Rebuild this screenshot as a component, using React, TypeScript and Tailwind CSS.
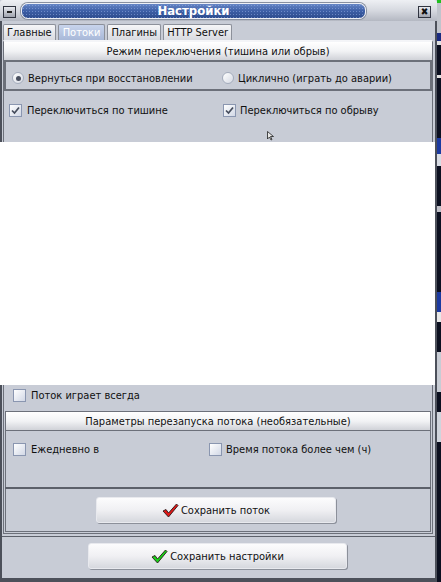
import React from "react";

const Check = ({ checked }: { checked?: boolean }) => (
  <div className="w-[13px] h-[13px] shrink-0 border border-[#8a96b0] bg-gradient-to-br from-[#ffffff] to-[#d2d8e6] flex items-center justify-center">
    {checked && (
      <svg width="9" height="9" viewBox="0 0 9 9">
        <path d="M1 4.5 L3.5 7 L8 1.5" stroke="#454c5c" strokeWidth="1.7" fill="none" />
      </svg>
    )}
  </div>
);

const Radio = ({ checked }: { checked?: boolean }) => (
  <div className="w-[12px] h-[12px] shrink-0 rounded-full border border-[#a4acbc] bg-gradient-to-br from-[#ffffff] to-[#d6dae4] flex items-center justify-center">
    {checked && <div className="w-[5px] h-[5px] rounded-full bg-[#4a5060]" />}
  </div>
);

const Tick = ({ color }: { color: string }) => (
  <svg width="17" height="15" viewBox="0 0 17 15">
    <path
      d="M1 8 L4 6.5 L6.5 10 L14.5 1 L16 2.5 L6.5 14 Z"
      fill={color}
      stroke="#2a1a1a"
      strokeWidth="0.9"
      strokeLinejoin="round"
    />
  </svg>
);

const Btn = ({ label, color, w }: { label: string; color: string; w: string }) => (
  <div
    className={`${w} h-[26px] rounded-[3px] bg-gradient-to-b from-[#fcfcfd] via-[#f0f0f3] to-[#d6d8de] border border-[#e8e9ee] shadow-[1px_1px_0_#8c909a] flex items-center justify-center gap-[2px] text-[#101010]`}
  >
    <Tick color={color} />
    <span>{label}</span>
  </div>
);

const Header = ({ text }: { text: string }) => (
  <div className="h-[19px] shrink-0 bg-gradient-to-b from-[#ffffff] via-[#f2f3f5] to-[#d0d2d8] border-b border-[#6c707a] flex items-center justify-center text-[#101010]">
    {text}
  </div>
);

export default function App() {
  return (
    <div
      className="w-[441px] h-[582px] flex bg-[#c8ccd6] text-[11px] leading-none text-[#101010] overflow-hidden"
      style={{ fontFamily: "'DejaVu Sans Condensed', 'DejaVu Sans', sans-serif", fontStretch: "condensed" }}
    >
      {/* window */}
      <div className="w-[437px] h-[582px] flex flex-col shrink-0">
        {/* title bar */}
        <div className="h-[21px] shrink-0 flex items-center bg-gradient-to-b from-[#eef0f4] via-[#d6d9e0] to-[#b4b8c2] rounded-tl-[3px] rounded-tr-[3px] px-[3px] gap-[5px]">
          <div className="w-[13px] h-[12px] mt-[2px] border border-[#303440] bg-gradient-to-b from-[#e8eaf0] to-[#a0a4ae] flex items-center justify-center">
            <div className="w-[5px] h-[2px] bg-[#202020]" />
          </div>
          <div className="w-[345px] h-[16px] rounded-[7px] border border-[#eef0f6] shadow-[0_0_0_1px_#8890a0] [background-image:radial-gradient(circle,rgba(150,175,230,0.55)_0.7px,transparent_0.9px),linear-gradient(to_bottom,#6686c6,#3d5fa6_50%,#2d4c8e)] [background-size:3px_3px,100%_100%] flex items-center justify-center">
            <span className="text-white font-bold text-[13px]">Настройки</span>
          </div>
          <div className="flex-1" />
          <div className="w-[13px] h-[12px] mt-[2px] mr-[3px] border border-[#303440] bg-gradient-to-b from-[#e8eaf0] to-[#a0a4ae] flex items-center justify-center text-[10px] font-bold">
            ✖
          </div>
        </div>

        {/* top body */}
        <div className="h-[121px] shrink-0 flex flex-col border-l-2 border-r-2 border-[#4c505a]">
          {/* tabs */}
          <div className="h-[19px] shrink-0 pt-[3px] pl-[1px] flex gap-[2px] items-end">
            <div className="h-[16px] px-[3px] flex items-center rounded-t-[2px] border border-b-0 border-[#8c909a] bg-gradient-to-b from-[#f6f6f8] to-[#d8dae0]">Главные</div>
            <div className="h-[16px] px-[4px] flex items-center rounded-t-[2px] border border-b-0 border-[#8c909a] bg-gradient-to-b from-[#c8d4ec] to-[#a8b8d8] text-white">Потоки</div>
            <div className="h-[16px] px-[3px] flex items-center rounded-t-[2px] border border-b-0 border-[#8c909a] bg-gradient-to-b from-[#f6f6f8] to-[#d8dae0]">Плагины</div>
            <div className="h-[16px] px-[3px] flex items-center rounded-t-[2px] border border-b-0 border-[#8c909a] bg-gradient-to-b from-[#f6f6f8] to-[#d8dae0]">HTTP Server</div>
          </div>
          {/* panel */}
          <div className="flex-1 ml-[1px] mr-[2px] border-l border-r border-t-2 border-l-[#6c707a] border-r-[#6c707a] border-t-[#f4f5f8] flex flex-col">
            <Header text="Режим переключения (тишина или обрыв)" />
            <div className="h-[30px] shrink-0 border-l-2 border-r-2 border-b-2 border-t border-[#6c707a] flex items-start pt-[10px] pl-[6px]">
              <div className="w-[210px] flex items-center gap-[4px]">
                <Radio checked />
                <span>Вернуться при восстановлении</span>
              </div>
              <div className="flex items-center gap-[4px]">
                <Radio />
                <span>Циклично (играть до аварии)</span>
              </div>
            </div>
            <div className="pt-[13px] pl-[5px] flex items-center">
              <div className="w-[214px] flex items-center gap-[5px]">
                <Check checked />
                <span>Переключиться по тишине</span>
              </div>
              <div className="flex items-center gap-[4px]">
                <Check checked />
                <span>Переключиться по обрыву</span>
              </div>
            </div>
            <div className="flex-1 relative">
              <svg className="absolute left-[263px] top-[14px]" width="8" height="10" viewBox="0 0 8 10">
                <path d="M0.5 0.5 L0.5 8 L2.5 6 L4 9 L5 8.5 L3.5 5.5 L6.5 5.5 Z" fill="#e8e8e8" stroke="#202020" strokeWidth="0.8" />
              </svg>
            </div>
          </div>
        </div>

        {/* white redaction */}
        <div className="h-[243px] flex shrink-0">
          <div className="w-[435px] bg-white" />
          <div className="w-[2px] bg-[#4c505a]" />
        </div>

        {/* bottom body */}
        <div className="flex-1 flex flex-col border-l-2 border-r-2 border-[#4c505a]">
          <div className="flex flex-col ml-[1px] mr-[2px] border-l border-r border-b border-[#6c707a]">
            <div className="h-[26px] shrink-0 pt-[4px] pl-[9px] flex items-start gap-[5px]">
              <Check />
              <span className="mt-[1px]">Поток играет всегда</span>
            </div>
            <div className="ml-[1px] mr-[1px] mb-[1px] border border-[#6c707a] flex flex-col">
              <Header text="Параметры перезапуска потока (необязательные)" />
              <div className="h-[56px] shrink-0 pt-[12px] pl-[7px] flex items-start">
                <div className="w-[196px] flex items-center gap-[5px]">
                  <Check />
                  <span>Ежедневно в</span>
                </div>
                <div className="flex items-center gap-[4px]">
                  <Check />
                  <span>Время потока более чем (ч)</span>
                </div>
              </div>
              <div className="h-[2px] shrink-0 bg-[#5c606a] -mx-[1px]" />
              <div className="h-[42px] shrink-0 pt-[8px] pl-[90px]">
                <Btn label="Сохранить поток" color="#e01818" w="w-[240px]" />
              </div>
            </div>
          </div>
          <div className="h-[2px] shrink-0" />
          <div className="flex-1 border-t border-[#5c606a] pt-[6px] pl-[86px] border-b-[4px] border-b-[#4c505a]">
            <Btn label="Сохранить настройки" color="#18d018" w="w-[259px]" />
          </div>
        </div>
      </div>

      {/* desktop strip */}
      <div className="w-[4px] flex flex-col bg-[#0c1020]">
        <div className="h-[3px] bg-[#20c020]" />
        <div className="h-[30px] bg-[#c0c4cc]" />
        <div className="h-[8px] bg-[#1a2a80]" />
        <div className="h-[4px] bg-[#e0e0e0]" />
        <div className="h-[30px]" />
        <div className="h-[3px] bg-[#e0e0e0]" />
        <div className="h-[60px]" />
        <div className="h-[16px] bg-[#1c3aa0]" />
        <div className="h-[12px] bg-[#d8dce4]" />
        <div className="h-[40px]" />
        <div className="h-[6px] bg-[#c0c0c8]" />
        <div className="h-[80px]" />
        <div className="h-[20px] bg-[#1c3aa0]" />
        <div className="h-[10px] bg-[#e8e8e8]" />
        <div className="h-[30px]" />
        <div className="h-[40px] bg-[#c8ccd4]" />
        <div className="h-[20px]" />
        <div className="h-[30px] bg-[#d0d4dc]" />
      </div>
    </div>
  );
}
